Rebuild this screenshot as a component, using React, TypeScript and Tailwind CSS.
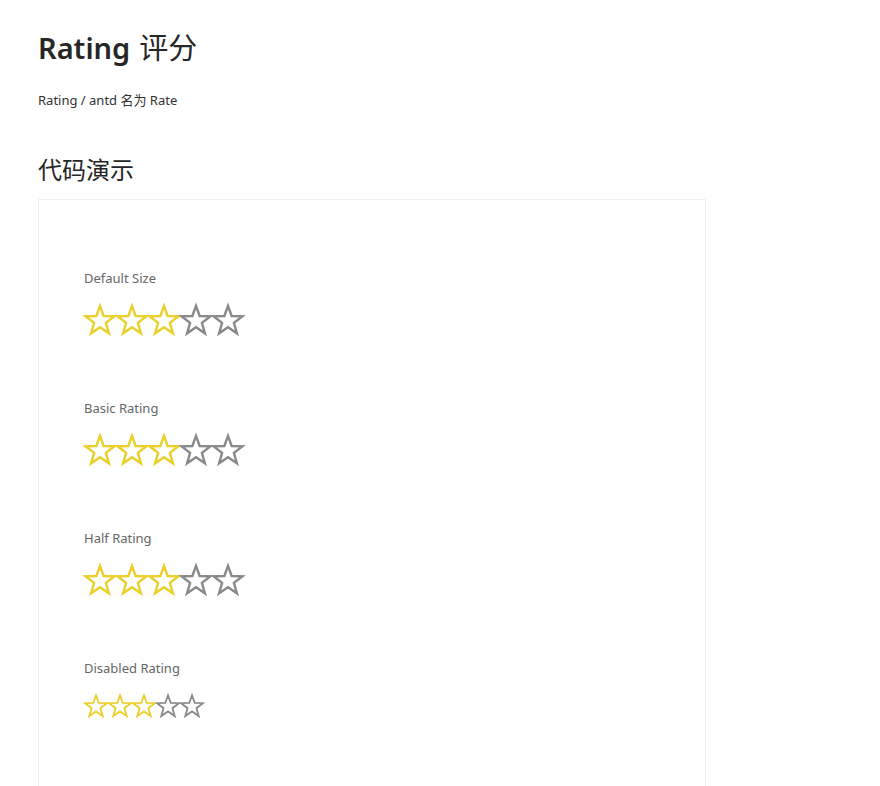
import React from "react";

const YELLOW = "#ebcf2a";
const GRAY = "#8a8a8a";

function starPoints(): string {
  const cx = 16;
  const cy = 17;
  const R = 15.2;
  const r = 6.2;
  const pts: string[] = [];
  for (let k = 0; k < 10; k++) {
    const a = ((-90 + k * 36) * Math.PI) / 180;
    const rad = k % 2 === 0 ? R : r;
    pts.push(`${(cx + rad * Math.cos(a)).toFixed(2)},${(cy + rad * Math.sin(a)).toFixed(2)}`);
  }
  return pts.join(" ");
}

const POINTS = starPoints();

function Star({ filled, size }: { filled: boolean; size: number }) {
  return (
    <svg width={size} height={size} viewBox="0 0 32 32" className="shrink-0 overflow-visible">
      <polygon
        points={POINTS}
        fill="white"
        stroke={filled ? YELLOW : GRAY}
        strokeWidth={2.4}
        strokeLinejoin="miter"
      />
    </svg>
  );
}

function Rate({ value, size = 32 }: { value: number; size?: number }) {
  return (
    <div className="flex">
      {[0, 1, 2, 3, 4].map((i) => (
        <Star key={i} filled={i < value} size={size} />
      ))}
    </div>
  );
}

const demos = [
  { label: "Default Size", value: 3, size: 32 },
  { label: "Basic Rating", value: 3, size: 32 },
  { label: "Half Rating", value: 3, size: 32 },
  { label: "Disabled Rating", value: 3, size: 24 },
];

export default function App() {
  return (
    <div
      className="min-h-[786px] bg-white px-[38px] pt-[28px] text-[#262626]"
      style={{ fontFamily: '"Noto Sans", "Noto Sans CJK SC", sans-serif' }}
    >
      <h1 className="text-[29px] leading-[40px]">
        <span className="font-semibold">Rating</span>
        <span className="ml-[9px]">评分</span>
      </h1>
      <p className="mt-[22px] text-[13px] leading-[20px] text-[#333]">Rating / antd 名为 Rate</p>
      <h2 className="mt-[43px] text-[24px] leading-[34px] text-[#262626]">代码演示</h2>
      <div className="mt-[12px] w-[668px] h-[600px] border border-[#f0f0f0] px-[45px] pt-[68px]">
        <div className="flex flex-col gap-[62px]">
          {demos.map((d) => (
            <div key={d.label} className="flex flex-col gap-[16px]">
              <div className="text-[13px] leading-[20px] text-[#666]">{d.label}</div>
              <Rate value={d.value} size={d.size} />
            </div>
          ))}
        </div>
      </div>
    </div>
  );
}
